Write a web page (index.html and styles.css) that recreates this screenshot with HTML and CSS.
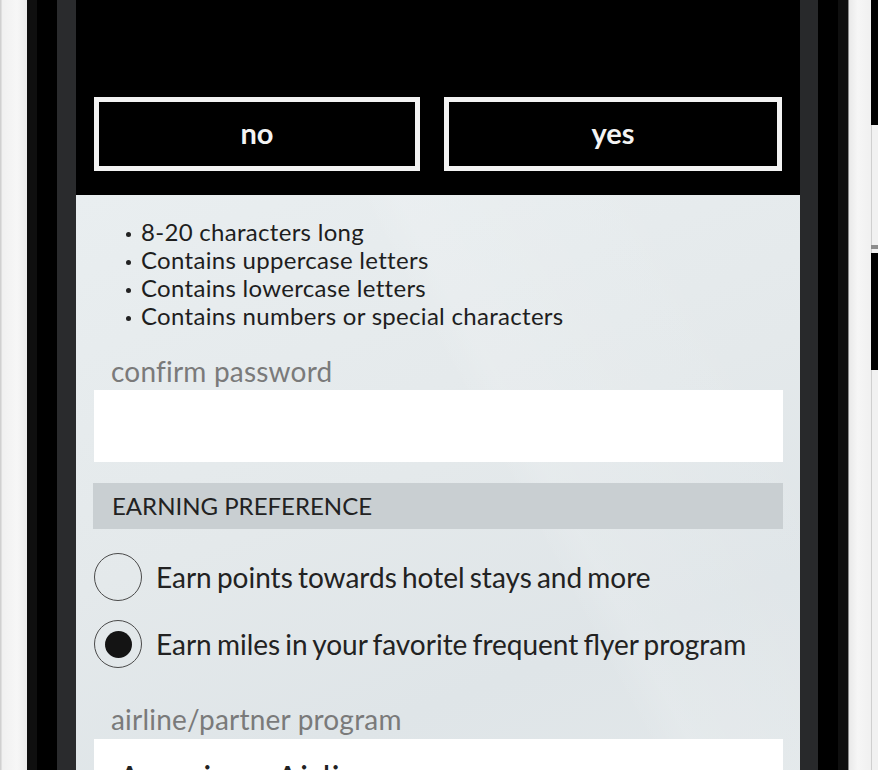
FILE: index.html
```html
<!DOCTYPE html>
<html lang="en">
<head>
<meta charset="utf-8">
<title>Earning preference</title>
<link rel="stylesheet" href="styles.css">
</head>
<body>
<div class="device">
  <div class="bezel bezel-left">
    <div class="edge-l"></div>
    <div class="case"></div>
    <div class="band band-a"></div>
    <div class="band band-b"></div>
    <div class="band band-c"></div>
  </div>

  <main class="screen">
    <div class="dialog-actions">
      <button class="btn btn-no" type="button">no</button>
      <button class="btn btn-yes" type="button">yes</button>
    </div>

    <section class="form">
      <ul class="rules">
        <li>8-20 characters long</li>
        <li>Contains uppercase letters</li>
        <li>Contains lowercase letters</li>
        <li>Contains numbers or special characters</li>
      </ul>

      <div class="field-label label-confirm">confirm password</div>
      <div class="input input-confirm"></div>

      <div class="section-bar">EARNING PREFERENCE</div>

      <div class="radio-list">
        <div class="radio-row">
          <span class="radio"></span>
          <span class="radio-text">Earn points towards hotel stays and more</span>
        </div>
        <div class="radio-row">
          <span class="radio checked"></span>
          <span class="radio-text">Earn miles in your favorite frequent flyer program</span>
        </div>
      </div>

      <div class="field-label label-airline">airline/partner program</div>
      <div class="input input-airline">American Airlines</div>
    </section>
  </main>

  <div class="bezel bezel-right">
    <div class="band band-c r"></div>
    <div class="band band-b"></div>
    <div class="band band-a"></div>
    <div class="seam"></div>
    <div class="case case-r"></div>
    <div class="edge-r">
      <div class="key key-top"></div>
      <div class="key-gap"></div>
      <div class="key-dash"></div>
      <div class="key key-mid"></div>
    </div>
  </div>
</div>
</body>
</html>
```

FILE: styles.css
```css
html, body {
  margin: 0;
  padding: 0;
  background: #f2f2f2;
}

body {
  width: 878px;
  height: 770px;
  overflow: hidden;
  font-family: Lato, "Open Sans", sans-serif;
}

.device {
  display: flex;
  height: 770px;
}

.bezel {
  display: flex;
  height: 100%;
}

.edge-l {
  width: 2px;
  background: linear-gradient(90deg, #c9c9c9, #e6e6e6);
}

.case {
  width: 25px;
  background: linear-gradient(90deg, #f0f0f0, #f7f7f7 60%, #ececec);
}

.band-a {
  width: 10px;
  background: #0f0f0f;
}

.band-b {
  width: 20px;
  background: #000;
}

.band-c {
  width: 19px;
  background: #2a2b2d;
}

.band-c.r {
  width: 18px;
  background: #28292b;
}

.seam {
  width: 1px;
  background: #8a8a8a;
}

.case-r {
  width: 22px;
  background: linear-gradient(90deg, #e9e9e9, #f6f6f6 40%, #f0f0f0);
}

.edge-r {
  width: 7px;
  display: flex;
  flex-direction: column;
  background: #f1f1f1;
  border-left: 1px solid #cfcfcf;
  box-sizing: border-box;
}

.key {
  background: #000;
  margin-left: -1px;
}

.key-top {
  height: 125px;
}

.key-gap {
  height: 120px;
}

.key-dash {
  height: 4px;
  background: #8d8d8d;
  margin-left: -1px;
  margin-bottom: 4px;
}

.key-mid {
  height: 117px;
}

/* screen */
.screen {
  width: 724px;
  height: 770px;
  display: flex;
  flex-direction: column;
  overflow: hidden;
}

.dialog-actions {
  height: 195px;
  flex: none;
  box-sizing: border-box;
  background: #000;
  padding: 97px 18px 0;
  display: flex;
  gap: 24px;
  align-items: flex-start;
}

.btn {
  height: 74px;
  box-sizing: border-box;
  border: 5px solid #f3f3f3;
  background: #000;
  color: #f3f3f3;
  font-family: Lato, sans-serif;
  font-weight: 700;
  font-size: 29px;
  padding: 0 0 4px;
  margin: 0;
}

.btn-no {
  width: 326px;
}

.btn-yes {
  width: 338px;
}

.form {
  flex: 1;
  padding: 0 17px 0 18px;
  background:
    linear-gradient(62deg, rgba(255,255,255,0) 58%, rgba(255,255,255,0.12) 62%, rgba(255,255,255,0) 88%),
    linear-gradient(160deg, #e9eef0 0%, #e4e9eb 45%, #dfe5e8 72%, #e3e8ea 100%);
}

.rules {
  list-style: none;
  margin: 0;
  padding: 23px 0 0 32px;
  font-size: 24px;
  letter-spacing: 0.3px;
  line-height: 28px;
  color: #1e1e1e;
}

.rules li {
  position: relative;
  padding-left: 15px;
}

.rules li::before {
  content: "";
  position: absolute;
  left: 0;
  top: 14px;
  width: 5px;
  height: 5px;
  border-radius: 50%;
  background: #222;
}

.field-label {
  font-size: 28px;
  letter-spacing: 0.2px;
  color: #7a7a7a;
  padding-left: 17px;
  line-height: 31px;
}

.label-confirm {
  margin-top: 26px;
}

.input {
  background: #fff;
  height: 72px;
  margin-top: 3px;
}

.section-bar {
  margin-top: 21px;
  height: 46px;
  line-height: 46px;
  background: #c9cfd2;
  color: #222;
  font-size: 24px;
  padding-left: 19px;
  margin-left: -1px;
}

.radio-list {
  margin-top: 24px;
  display: flex;
  flex-direction: column;
  gap: 19px;
}

.radio-row {
  display: flex;
  align-items: center;
  gap: 14px;
}

.radio {
  width: 48px;
  height: 48px;
  box-sizing: border-box;
  border: 1.5px solid #4a4a4a;
  border-radius: 50%;
  display: flex;
  align-items: center;
  justify-content: center;
  flex: none;
}

.radio.checked::after {
  content: "";
  width: 27px;
  height: 27px;
  border-radius: 50%;
  background: #141414;
}

.radio-text {
  font-size: 28px;
  word-spacing: -2px;
  color: #222;
  line-height: 31px;
}

.label-airline {
  margin-top: 36px;
}

.input-airline {
  height: 80px;
  margin-top: 4px;
  box-sizing: border-box;
  padding: 19px 0 0 24px;
  font-size: 34px;
  letter-spacing: 1px;
  line-height: 40px;
  color: #222;
}
```
